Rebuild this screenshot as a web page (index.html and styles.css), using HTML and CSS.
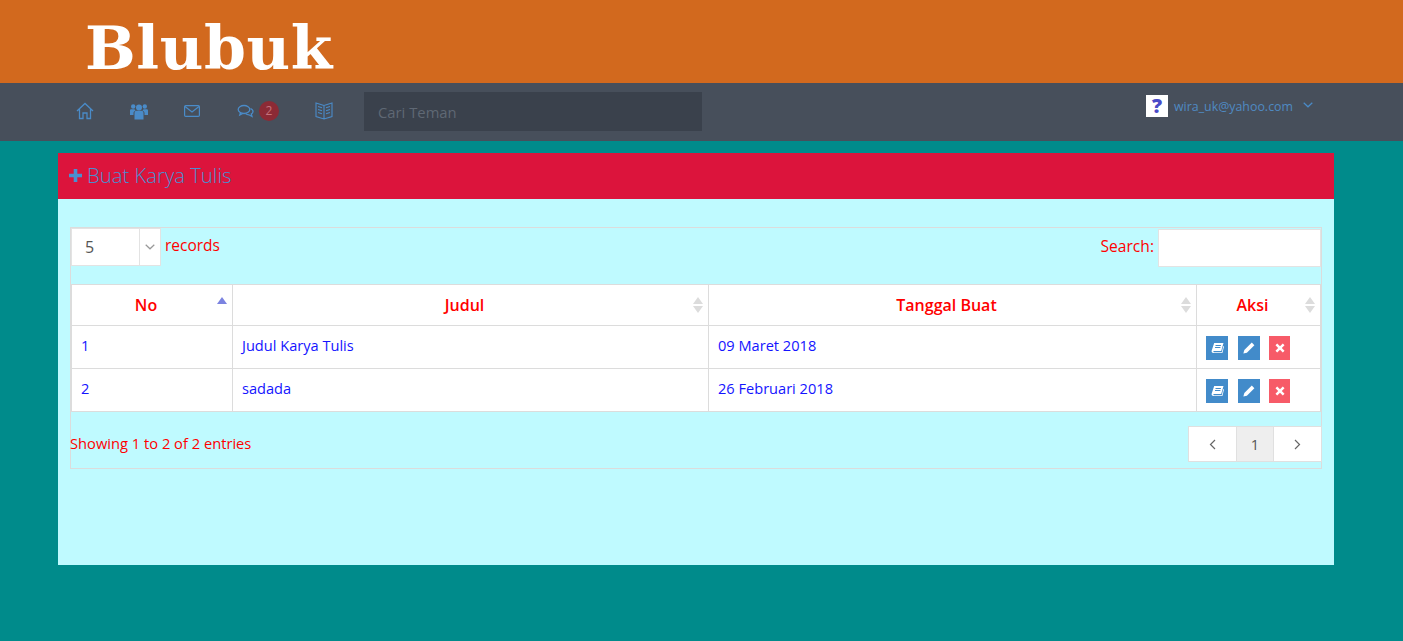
FILE: index.html
```html
<!DOCTYPE html>
<html lang="en">
<head>
    <meta charset="UTF-8">
    <title>Buat Karya Tulis</title>
    <link rel="stylesheet" href="styles.css">
</head>
<body>

<header class="topBar">
    <div class="logo">Blubuk</div>
</header>

<nav class="navBar">
    <a class="navIcon" href="#">
      <svg width="18" height="18" viewBox="0 0 18 18" fill="none" stroke="#4a8bc8" stroke-width="1.300"><path d="M1 9 9 1.500 17 9M3.500 7.200V16.500H7V11h4v5.500h3.500V7.200"/></svg>
    </a>
    <a class="navIcon" href="#">
      <svg width="18" height="17" viewBox="0 0 18 17" fill="#4a8bc8"><circle cx="9" cy="4.500" r="3"/><circle cx="3.200" cy="3.500" r="2.200"/><circle cx="14.800" cy="3.500" r="2.200"/><path d="M4.500 10c0-1.400.9-2.200 2-2.200h5c1.100 0 2 .8 2 2.200v6.500h-9zM0 7.500C0 6.700.6 6.200 1.400 6.200h3c.4.700.8 1.100 1.300 1.400C4.300 8 3.500 9 3.500 10.300v1.700H0zM18 7.500c0-.8-.6-1.300-1.400-1.300h-3c-.4.700-.8 1.100-1.300 1.400 1.400.4 2.200 1.400 2.200 2.700v1.700H18z"/></svg>
    </a>
    <a class="navIcon" href="#">
      <svg width="16" height="12" viewBox="0 0 16 12" fill="none" stroke="#4a8bc8" stroke-width="1.200"><rect x=".6" y=".6" width="14.800" height="10.800" rx="1.200"/><path d="M1 1.500 8 7l7-5.500"/></svg>
    </a>
    <a class="navIcon navIconChat" href="#">
      <svg width="17" height="15" viewBox="0 0 17 15" fill="none" stroke="#4a8bc8" stroke-width="1.300"><ellipse cx="7" cy="5.500" rx="5.800" ry="4"/><path d="M3.500 8.700 2.800 11l3-1.600M13.500 4.500c1.600.7 2.700 1.800 2.500 3.300-.1 1-1 1.800-1.700 2.300l.7 2.400-3.100-1.700c-1.300 0-2.400-.4-3.200-1"/></svg>
      <span class="badge">2</span>
    </a>
    <a class="navIcon" href="#">
      <svg width="18" height="18" viewBox="0 0 18 18" fill="none" stroke="#4a8bc8" stroke-width="1.100"><path d="M9 3.500 1 1v13.500L9 17l8-2.500V1zM9 3.500V17M3 4.500l4 1.200M3 7.500l4 1.200M3 10.500l4 1.200M15 4.500l-4 1.200M15 7.500l-4 1.200M15 10.500l-4 1.200"/></svg>
    </a>
    <input class="searchFriend" type="text" placeholder="Cari Teman">
    <div class="userMenu">
      <span class="avatar">?</span>
      <span class="userMail">wira_uk@yahoo.com</span>
      <svg width="10" height="6" viewBox="0 0 10 6" fill="none" stroke="#4a8bc8" stroke-width="1.200"><path d="M.7.7 5 4.800 9.300.7"/></svg>
    </div>
</nav>

<main class="panel">
    <div class="panelHead">
      <svg width="13" height="13" viewBox="0 0 13 13" fill="#4a8fd0"><path d="M4.700 0h3.600v4.700H13v3.600H8.300V13H4.700V8.300H0V4.700h4.700z"/></svg>
      <span>Buat Karya Tulis</span>
    </div>
    <div class="panelBody">
      <div class="tableBox">
        <div class="tableTools">
          <div class="lengthControl">
            <div class="selectBox">
              <span class="selectValue">5</span>
              <span class="selectArrow">
                <svg width="10" height="6" viewBox="0 0 10 6" fill="none" stroke="#999" stroke-width="1.200"><path d="M.7.7 5 4.800 9.300.7"/></svg>
              </span>
            </div>
            <span class="recordsLabel">records</span>
          </div>
          <label class="searchControl">Search: <input type="text"></label>
        </div>

        <table class="dataTable">
          <colgroup>
            <col class="colNo"><col class="colJudul"><col class="colTanggal"><col class="colAksi">
          </colgroup>
          <thead>
            <tr>
              <th>No<span class="sortIcon sortAsc"></span></th>
              <th>Judul<span class="sortIcon"></span></th>
              <th>Tanggal Buat<span class="sortIcon"></span></th>
              <th>Aksi<span class="sortIcon"></span></th>
            </tr>
          </thead>
          <tbody>
            <tr>
              <td>1</td>
              <td>Judul Karya Tulis</td>
              <td>09 Maret 2018</td>
              <td>
                <div class="actions">
                  <a class="actionBtn btnBlue" href="#"><svg width="13" height="12" viewBox="0 0 13 12" fill="#fff"><path d="M3.200 1h9.300L10.200 9H3c-.9 0-1 1.300 0 1.300h7.800l1.500-6.300.7.500-1.600 6.500H2.500C1 11 .3 10 .7 8.500zM4.600 3l-.2.9h5.400l.2-.9zM4.100 5l-.2.9h5.400l.2-.9z"/></svg></a>
                  <a class="actionBtn btnBlue" href="#"><svg width="12" height="12" viewBox="0 0 12 12" fill="#fff"><path d="M8.800.6 11.400 3.200 3.900 10.700.4 11.600 1.300 8.100z"/></svg></a>
                  <a class="actionBtn btnRed btnNarrow" href="#"><svg width="10" height="10" viewBox="0 0 10 10" fill="#fff"><path d="M2.200.5 5 3.200 7.800.5l1.700 1.700L6.800 5l2.700 2.800-1.700 1.700L5 6.800 2.200 9.500.5 7.800 3.200 5 .5 2.200z"/></svg></a>
                </div>
              </td>
            </tr>
            <tr>
              <td>2</td>
              <td>sadada</td>
              <td>26 Februari 2018</td>
              <td>
                <div class="actions">
                  <a class="actionBtn btnBlue" href="#"><svg width="13" height="12" viewBox="0 0 13 12" fill="#fff"><path d="M3.200 1h9.300L10.200 9H3c-.9 0-1 1.300 0 1.300h7.800l1.500-6.300.7.500-1.600 6.500H2.500C1 11 .3 10 .7 8.500zM4.600 3l-.2.9h5.400l.2-.9zM4.100 5l-.2.9h5.400l.2-.9z"/></svg></a>
                  <a class="actionBtn btnBlue" href="#"><svg width="12" height="12" viewBox="0 0 12 12" fill="#fff"><path d="M8.800.6 11.400 3.200 3.900 10.700.4 11.600 1.300 8.100z"/></svg></a>
                  <a class="actionBtn btnRed btnNarrow" href="#"><svg width="10" height="10" viewBox="0 0 10 10" fill="#fff"><path d="M2.200.5 5 3.200 7.800.5l1.700 1.700L6.800 5l2.700 2.800-1.700 1.700L5 6.800 2.200 9.500.5 7.800 3.200 5 .5 2.200z"/></svg></a>
                </div>
              </td>
            </tr>
          </tbody>
        </table>

        <div class="tableFoot">
          <div class="tableInfo">Showing 1 to 2 of 2 entries</div>
          <div class="pager">
            <a class="pageBtn pageArrow" href="#"><svg width="7" height="11" viewBox="0 0 7 11" fill="none" stroke="#666" stroke-width="1.200"><path d="M6 1 1.500 5.500 6 10"/></svg></a>
            <a class="pageBtn pageCurrent" href="#">1</a>
            <a class="pageBtn pageArrow" href="#"><svg width="7" height="11" viewBox="0 0 7 11" fill="none" stroke="#666" stroke-width="1.200"><path d="M1 1l4.500 4.500L1 10"/></svg></a>
          </div>
        </div>
      </div>
    </div>
</main>

</body>
</html>
```

FILE: styles.css
```css
body, html {
  margin: 0;
  padding: 0;
  height: 100%;
  overflow: hidden;
}

body {
  background-color: #008b8b;
  font-family: 'Open Sans', sans-serif;
  font-size: 14px;
  color: #333;
}

a {
  text-decoration: none;
}

.topBar {
  height: 83px;
  box-sizing: border-box;
  padding: 15px 0 0 85px;
  background-color: #d2691e;
}

.logo {
  font-family: 'DejaVu Serif', serif;
  font-size: 60px;
  font-weight: 700;
  line-height: 66px;
  letter-spacing: 0.6px;
  color: white;
}

.navBar {
  height: 58px;
  box-sizing: border-box;
  display: flex;
  align-items: flex-start;
  padding: 9px 90px 0 76px;
  background-color: #474f5b;
}

.navIcon {
  width: 18px;
  height: 38px;
  margin-right: 36px;
  display: flex;
  align-items: center;
}

.navIconChat {
  width: 44px;
  margin-right: 34px;
  margin-left: -1px;
}

.badge {
  width: 20px;
  height: 20px;
  margin-left: 5px;
  border-radius: 50%;
  background-color: #8c2a35;
  color: #c5737c;
  font-size: 12px;
  line-height: 20px;
  text-align: center;
}

.searchFriend {
  width: 338px;
  height: 39px;
  box-sizing: border-box;
  margin: 0 0 0 -5px;
  padding: 0 14px;
  border: none;
  outline: none;
  background-color: #3a414c;
  font-family: inherit;
  font-size: 14.8px;
  color: #fff;
}

.searchFriend::placeholder {
  color: #5f6874;
}

.userMenu {
  margin-left: auto;
  margin-top: 3px;
  display: flex;
  align-items: center;
  height: 22px;
  color: #4f8ac2;
  font-size: 12.4px;
}

.avatar {
  width: 22px;
  height: 22px;
  margin-right: 6px;
  background-color: white;
  color: #4a4ac8;
  font-size: 20px;
  font-weight: 800;
  line-height: 22px;
  text-align: center;
}

.userMail {
  margin-right: 10px;
}

.userMenu svg {
  margin-bottom: 3px;
}

.panel {
  width: 1276px;
  height: 412px;
  margin: 12px 0 0 58px;
  background-color: #bffaff;
}

.panelHead {
  height: 46px;
  box-sizing: border-box;
  display: flex;
  align-items: center;
  gap: 5px;
  padding: 0 0 1px 11px;
  background-color: #dc143c;
  color: #4a8fd0;
  font-size: 20.3px;
  font-weight: 300;
}

.panelHead span {
  margin-bottom: 2px;
}

.panelBody {
  padding: 28px 12px 0 12px;
}

.tableBox {
  height: 242px;
  box-sizing: border-box;
  border: 1px solid #dcdcdc;
}

.tableTools {
  display: flex;
  justify-content: space-between;
  height: 56px;
}

.lengthControl {
  display: flex;
  align-items: flex-start;
}

.selectBox {
  width: 90px;
  height: 38px;
  box-sizing: border-box;
  display: flex;
  background-color: white;
  border: 1px solid #e3e3e3;
}

.selectValue {
  flex: 1;
  padding-left: 13px;
  font-size: 16px;
  line-height: 36px;
  color: #555;
}

.selectArrow {
  width: 20px;
  border-left: 1px solid #e3e3e3;
  display: flex;
  align-items: center;
  justify-content: center;
}

.recordsLabel {
  margin-left: 4px;
  color: #f00;
  font-size: 15.5px;
  line-height: 34px;
}

.searchControl {
  display: flex;
  align-items: flex-start;
  gap: 4px;
  color: #f00;
  font-size: 15.6px;
  line-height: 36px;
}

.searchControl input {
  width: 163px;
  height: 38px;
  box-sizing: border-box;
  margin: 1px 0 0 0;
  border: 1px solid #e3e3e3;
  background-color: white;
  outline: none;
}

.dataTable {
  width: 1249px;
  table-layout: fixed;
  border-collapse: collapse;
  background-color: white;
}

.colNo { width: 161px; }
.colJudul { width: 476px; }
.colTanggal { width: 488px; }
.colAksi { width: 124px; }

.dataTable th, .dataTable td {
  border: 1px solid #dcdcdc;
}

.dataTable th {
  position: relative;
  height: 40px;
  padding: 0 12px 0 0;
  color: #f00;
  font-size: 16px;
  font-weight: 600;
  text-align: center;
}

.dataTable td {
  height: 37px;
  padding: 0 10px 5px 9px;
  color: #1414ff;
  font-size: 14.6px;
}

.sortIcon {
  position: absolute;
  top: 12px;
  right: 5px;
  width: 0;
  height: 0;
  border-left: 5px solid transparent;
  border-right: 5px solid transparent;
  border-bottom: 7px solid #dcdcdc;
}

.sortIcon::after {
  content: '';
  position: absolute;
  top: 9px;
  left: -5px;
  border-left: 5px solid transparent;
  border-right: 5px solid transparent;
  border-top: 7px solid #dcdcdc;
}

.sortAsc {
  border-bottom-color: #7b83e0;
}

.sortAsc::after {
  display: none;
}

.actions {
  display: flex;
  gap: 10px;
  padding-top: 7px;
}

.actionBtn {
  width: 22px;
  height: 24px;
  display: flex;
  align-items: center;
  justify-content: center;
}

.btnNarrow {
  width: 21px;
  margin-left: -1px;
}

.btnBlue {
  background-color: #428bca;
}

.btnRed {
  background-color: #f75b68;
}

.tableFoot {
  display: flex;
  justify-content: space-between;
  align-items: flex-start;
  padding-top: 14px;
}

.tableInfo {
  padding-top: 7px;
  margin-left: -1px;
  color: #f00;
  font-size: 14.7px;
}

.pager {
  display: flex;
  height: 36px;
  box-sizing: border-box;
  margin-right: -1px;
  border: 1px solid #e0e0e0;
  background-color: white;
}

.pageBtn {
  display: flex;
  align-items: center;
  justify-content: center;
  color: #555;
  font-size: 14.6px;
}

.pageArrow {
  width: 47px;
}

.pageCurrent {
  width: 36px;
  border-left: 1px solid #e0e0e0;
  border-right: 1px solid #e0e0e0;
  background-color: #eee;
}
```
